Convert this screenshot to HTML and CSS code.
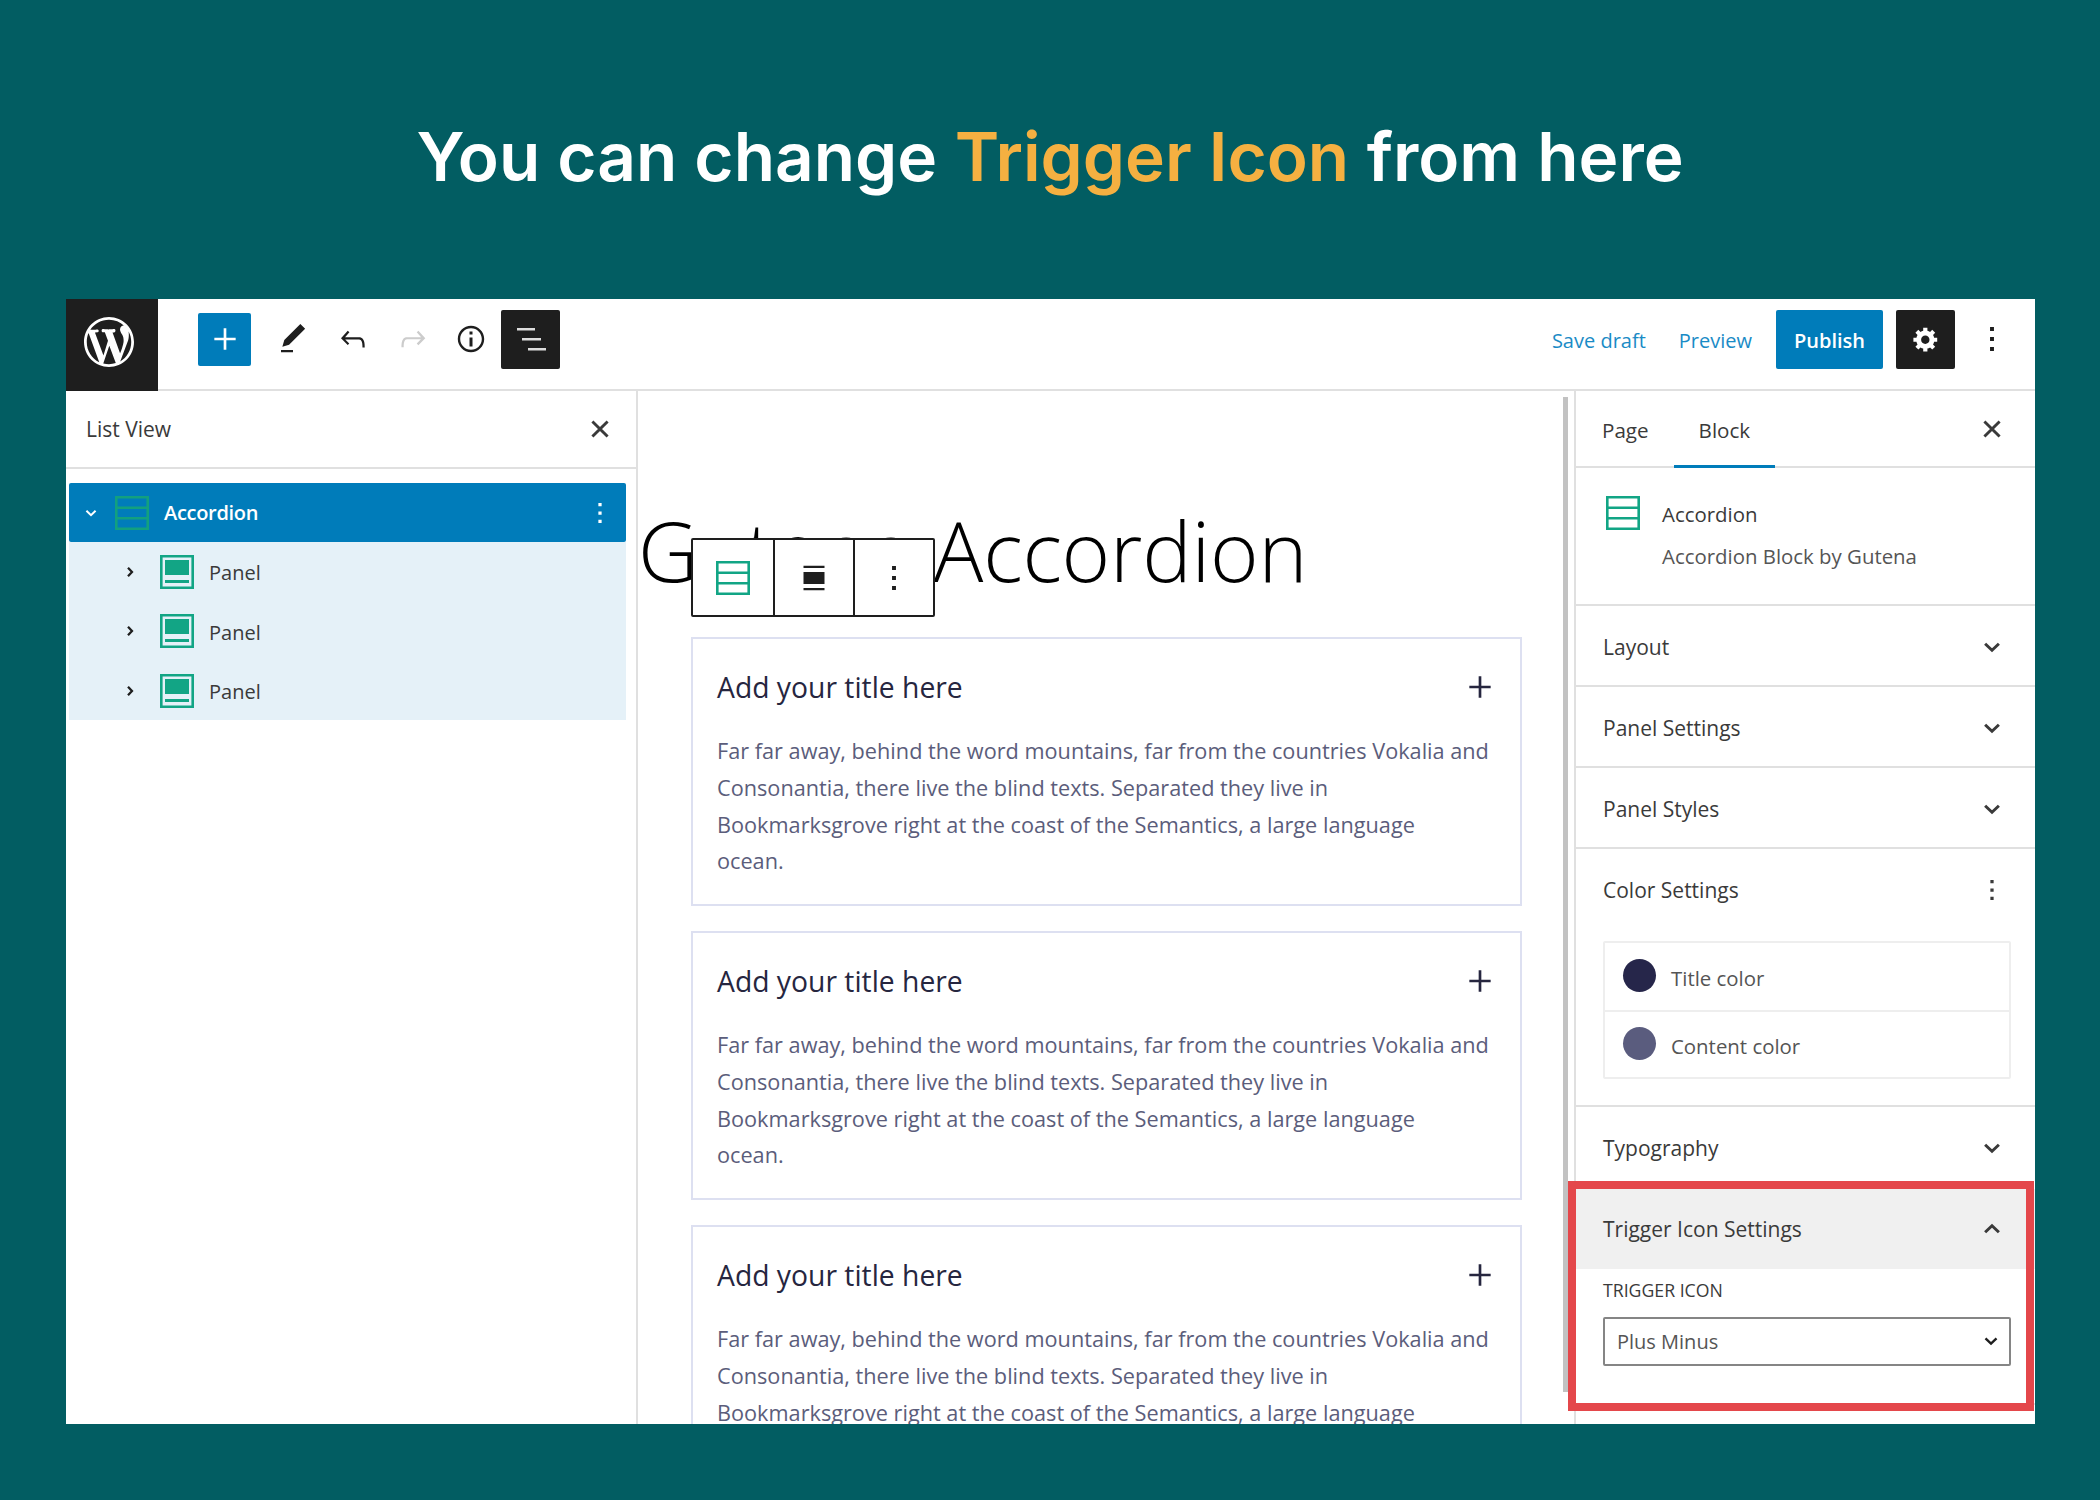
FILE: index.html
```html
<!DOCTYPE html>
<html lang="en">
<head>
  <meta charset="UTF-8">
  <title>Trigger Icon Settings</title>
  <link rel="stylesheet" href="styles.css">
</head>
<body>
  <svg class="defs" width="0" height="0">
    <symbol id="i-close" viewBox="0 0 24 24"><path d="M5.5 5.5l13 13M18.5 5.5l-13 13" fill="none" stroke="currentColor" stroke-width="2.5"/></symbol>
    <symbol id="i-down" viewBox="0 0 24 24"><path d="M17.5 9.4L12 14.6 6.5 9.4" fill="none" stroke="currentColor" stroke-width="2.4"/></symbol>
    <symbol id="i-up" viewBox="0 0 24 24"><path d="M6.5 14.6L12 9.4l5.5 5.2" fill="none" stroke="currentColor" stroke-width="2.4"/></symbol>
    <symbol id="i-right" viewBox="0 0 24 24"><path d="M9 5.5l6 6.5-6 6.5" fill="none" stroke="currentColor" stroke-width="3.4"/></symbol>
    <symbol id="i-dots" viewBox="0 0 24 24"><path d="M10.7 4h2.6v2.6h-2.6zM10.7 10.7h2.6v2.6h-2.6zM10.7 17.4h2.6V20h-2.6z"/></symbol>
    <symbol id="i-plus" viewBox="0 0 24 24"><path d="M11 4h2v7h7v2h-7v7h-2v-7H4v-2h7z"/></symbol>
    <symbol id="i-accordion" viewBox="0 0 34 34"><path d="M1.3 1.3h31.4v31.4H1.3zM1.3 11.7h31.4M1.3 22.3h31.4" fill="none" stroke="currentColor" stroke-width="2.6"/></symbol>
    <symbol id="i-panel" viewBox="0 0 34 34"><path d="M1.3 1.3h31.4v31.4H1.3z" fill="none" stroke="currentColor" stroke-width="2.6"/><path d="M5 5h24v15H5zM5 25h24v3H5z"/></symbol>
  </svg>

  <h1 class="headline">You can change <span class="accent">Trigger Icon</span> from here</h1>

  <div class="editor">
    <header class="topbar">
      <div class="wp-logo">
        <svg viewBox="0 0 20 20" width="50" height="50"><path d="M20 10c0-5.51-4.49-10-10-10C4.48 0 0 4.49 0 10c0 5.52 4.48 10 10 10 5.51 0 10-4.48 10-10zM7.78 15.37L4.37 6.22c.55-.02 1.17-.08 1.17-.08.5-.06.44-1.13-.06-1.11 0 0-1.45.11-2.37.11-.18 0-.37 0-.58-.01C4.12 2.69 6.87 1.11 10 1.11c2.33 0 4.45.87 6.05 2.34-.68-.11-1.65.39-1.65 1.58 0 .74.45 1.36.9 2.1.35.61.55 1.36.55 2.46 0 1.49-1.4 5-1.4 5l-3.03-8.37c.54-.02.82-.17.82-.17.5-.05.44-1.25-.06-1.22 0 0-1.44.12-2.38.12-.87 0-2.33-.12-2.33-.12-.5-.03-.56 1.2-.06 1.22l.92.08 1.26 3.41zM17.41 10c.24-.64.74-1.87.43-4.25.7 1.29 1.05 2.71 1.05 4.25 0 3.29-1.73 6.24-4.4 7.78.97-2.59 1.94-5.2 2.92-7.78zM6.1 18.09C3.12 16.65 1.11 13.53 1.11 10c0-1.3.23-2.48.72-3.59C3.25 10.3 4.67 14.2 6.1 18.09zm4.03-6.63l2.58 6.98c-.86.29-1.76.45-2.71.45-.79 0-1.57-.11-2.29-.33.81-2.38 1.62-4.74 2.42-7.1z"/></svg>
      </div>
      <div class="tools">
        <button class="add-btn"><svg width="32" height="32"><use href="#i-plus"/></svg></button>
        <svg class="tool" viewBox="0 0 24 24" width="36" height="36"><path d="M20.1 5.1L16.9 2 6.2 12.7l-1.3 4.4 4.5-1.3L20.1 5.1zM4 20.8h8v-1.5H4v1.5z"/></svg>
        <svg class="tool" viewBox="0 0 24 24" width="36" height="36"><path d="M18.3 11.7c-.6-.6-1.4-.9-2.3-.9H6.7l2.9-3.3-1.1-1-4.5 5L8.5 16l1-1-2.7-2.7H16c.5 0 .9.2 1.3.5 1 1 1 3.4 1 4.5v.3h1.5v-.2c0-1.5 0-4.3-1.5-5.7z"/></svg>
        <svg class="tool tool-off" viewBox="0 0 24 24" width="36" height="36"><path d="M15.6 6.5l-1.1 1 2.9 3.3H8c-.9 0-1.7.3-2.3.9-1.4 1.5-1.4 4.2-1.4 5.6v.2h1.5v-.3c0-1.1 0-3.5 1-4.5.3-.3.7-.5 1.3-.5h9.2L14.5 15l1.1 1.1 4.6-4.6-4.6-5z"/></svg>
        <svg class="tool" viewBox="0 0 24 24" width="36" height="36"><path d="M12 3.2c-4.8 0-8.8 3.9-8.8 8.8 0 4.8 3.9 8.8 8.8 8.8 4.8 0 8.8-3.9 8.8-8.8 0-4.8-4-8.8-8.8-8.8zm0 16c-4 0-7.2-3.3-7.2-7.2C4.8 8 8 4.8 12 4.8s7.2 3.3 7.2 7.2c0 4-3.2 7.2-7.2 7.2zM11 17h2v-6h-2v6zm0-8h2V7h-2v2z"/></svg>
        <button class="dark-btn list-btn">
          <svg viewBox="0 0 32 32" width="32" height="32"><path d="M2 5h18v2.6H2zM7 15h19v2.6H7zM13 25h18v2.6H13z"/></svg>
        </button>
      </div>
      <div class="actions">
        <a class="link save-link">Save draft</a>
        <a class="link preview-link">Preview</a>
        <button class="publish-btn">Publish</button>
        <button class="dark-btn gear-btn">
          <svg viewBox="0 0 20 20" width="28" height="28"><path d="M18 12h-2.18c-.17.7-.44 1.35-.81 1.93l1.54 1.54-2.1 2.1-1.54-1.54c-.58.36-1.23.63-1.91.79V19H8v-2.18c-.68-.16-1.33-.43-1.91-.79l-1.54 1.54-2.12-2.12 1.54-1.54c-.36-.58-.63-1.23-.79-1.91H1V9.03h2.17c.16-.7.44-1.35.8-1.94L2.43 5.55l2.1-2.1 1.54 1.54c.58-.37 1.24-.64 1.93-.81V2h3v2.18c.68.16 1.33.43 1.91.79l1.54-1.54 2.12 2.12-1.54 1.54c.36.59.64 1.24.8 1.94H18V12zm-8.5 1.5c1.66 0 3-1.34 3-3s-1.34-3-3-3-3 1.34-3 3 1.34 3 3 3z"/></svg>
        </button>
        <svg class="tool more" width="36" height="36"><use href="#i-dots"/></svg>
      </div>
    </header>

    <div class="workspace">
      <aside class="list-view">
        <div class="list-head">
          <span>List View</span>
          <svg width="28" height="28"><use href="#i-close"/></svg>
        </div>
        <ul class="tree">
          <li class="tree-row tree-root">
            <svg class="tree-arrow" width="20" height="20"><use href="#i-down"/></svg>
            <svg class="tree-icon" width="34" height="34"><use href="#i-accordion"/></svg>
            <span class="tree-label">Accordion</span>
            <svg class="tree-more" width="30" height="30"><use href="#i-dots"/></svg>
          </li>
          <li class="tree-row tree-child">
            <svg class="tree-arrow" width="16" height="16"><use href="#i-right"/></svg>
            <svg class="tree-icon" width="34" height="34"><use href="#i-panel"/></svg>
            <span>Panel</span>
          </li>
          <li class="tree-row tree-child">
            <svg class="tree-arrow" width="16" height="16"><use href="#i-right"/></svg>
            <svg class="tree-icon" width="34" height="34"><use href="#i-panel"/></svg>
            <span>Panel</span>
          </li>
          <li class="tree-row tree-child">
            <svg class="tree-arrow" width="16" height="16"><use href="#i-right"/></svg>
            <svg class="tree-icon" width="34" height="34"><use href="#i-panel"/></svg>
            <span>Panel</span>
          </li>
        </ul>
      </aside>

      <main class="canvas">
        <h2 class="post-title">Gutena Accordion</h2>
        <div class="block-toolbar">
          <div class="block-tool">
            <svg class="teal" width="34" height="34"><use href="#i-accordion"/></svg>
          </div>
          <div class="block-tool">
            <svg viewBox="0 0 24 24" width="36" height="36"><path d="M5 3.8h14v1.6H5zM5 8h14v8H5zM5 18.6h14v1.6H5z"/></svg>
          </div>
          <div class="block-tool">
            <svg width="36" height="36"><use href="#i-dots"/></svg>
          </div>
        </div>

        <article class="panel">
          <div class="panel-title">
            <span>Add your title here</span>
            <svg width="32" height="32"><use href="#i-plus"/></svg>
          </div>
          <p class="panel-text">Far far away, behind the word mountains, far from the countries Vokalia and Consonantia, there live the blind texts. Separated they live in Bookmarksgrove right at the coast of the Semantics, a large language<br>ocean.</p>
        </article>
        <article class="panel">
          <div class="panel-title">
            <span>Add your title here</span>
            <svg width="32" height="32"><use href="#i-plus"/></svg>
          </div>
          <p class="panel-text">Far far away, behind the word mountains, far from the countries Vokalia and Consonantia, there live the blind texts. Separated they live in Bookmarksgrove right at the coast of the Semantics, a large language<br>ocean.</p>
        </article>
        <article class="panel">
          <div class="panel-title">
            <span>Add your title here</span>
            <svg width="32" height="32"><use href="#i-plus"/></svg>
          </div>
          <p class="panel-text">Far far away, behind the word mountains, far from the countries Vokalia and Consonantia, there live the blind texts. Separated they live in Bookmarksgrove right at the coast of the Semantics, a large language<br>ocean.</p>
        </article>
        <div class="scrollbar"></div>
      </main>

      <aside class="sidebar">
        <div class="side-tabs">
          <span class="side-tab">Page</span>
          <span class="side-tab side-tab-on">Block</span>
          <svg class="side-close" width="28" height="28"><use href="#i-close"/></svg>
        </div>
        <div class="block-card">
          <svg class="teal" width="34" height="34"><use href="#i-accordion"/></svg>
          <div>
            <div class="block-name">Accordion</div>
            <div class="block-desc">Accordion Block by Gutena</div>
          </div>
        </div>
        <section class="side-section">
          <div class="side-head"><span>Layout</span><svg width="30" height="30"><use href="#i-down"/></svg></div>
        </section>
        <section class="side-section">
          <div class="side-head"><span>Panel Settings</span><svg width="30" height="30"><use href="#i-down"/></svg></div>
        </section>
        <section class="side-section">
          <div class="side-head"><span>Panel Styles</span><svg width="30" height="30"><use href="#i-down"/></svg></div>
        </section>
        <section class="side-section color-section">
          <div class="side-head"><span>Color Settings</span><svg width="30" height="30"><use href="#i-dots"/></svg></div>
          <div class="color-box">
            <div class="color-row"><i class="swatch swatch-title"></i>Title color</div>
            <div class="color-row"><i class="swatch swatch-content"></i>Content color</div>
          </div>
        </section>
        <section class="side-section typography-section">
          <div class="side-head"><span>Typography</span><svg width="30" height="30"><use href="#i-down"/></svg></div>
        </section>
        <section class="side-section trigger-section">
          <div class="side-head trigger-head"><span>Trigger Icon Settings</span><svg width="30" height="30"><use href="#i-up"/></svg></div>
          <div class="trigger-body">
            <label class="field-label" for="triggerIcon">Trigger Icon</label>
            <div class="select-wrap">
              <select id="triggerIcon" class="select">
                <option>Plus Minus</option>
              </select>
              <svg width="24" height="24"><use href="#i-down"/></svg>
            </div>
          </div>
          <div class="highlight"></div>
        </section>
      </aside>
    </div>
  </div>
</body>
</html>
```

FILE: styles.css
```css
* { box-sizing: border-box; }
html, body { margin: 0; height: 100%; }
body {
  background: #025d62;
  font-family: "Open Sans", "Noto Sans", sans-serif;
  color: #1e1e1e;
  overflow: hidden;
}
.defs { position: absolute; }
svg { display: block; flex: none; fill: currentColor; }
button { border: none; padding: 0; font: inherit; }

.headline {
  height: 299px;
  margin: 0;
  padding-top: 14px;
  display: flex;
  align-items: center;
  justify-content: center;
  gap: 0.26em;
  font-family: Inter, sans-serif;
  font-size: 67.5px;
  font-weight: 600;
  color: #fff;
}
.accent { color: #f5b041; }

.editor {
  width: 1969px;
  height: 1125px;
  margin-left: 66px;
  background: #fff;
  display: flex;
  flex-direction: column;
  overflow: hidden;
}

/* top bar */
.topbar {
  height: 92px;
  flex: none;
  display: flex;
  align-items: center;
  border-bottom: 2px solid #e0e0e0;
}
.wp-logo {
  width: 92px;
  height: 92px;
  margin-bottom: -2px;
  padding: 0 6px 7px 0;
  background: #1e1e1e;
  color: #fff;
  display: flex;
  align-items: center;
  justify-content: center;
}
.tools {
  display: flex;
  align-items: center;
  margin: 0 0 10px 40px;
}
.add-btn {
  width: 53px;
  height: 53px;
  margin-right: 24px;
  border-radius: 2px;
  background: #007cba;
  color: #fff;
  display: flex;
  align-items: center;
  justify-content: center;
}
.add-btn svg { width: 32px; height: 32px; }
.tool { margin-right: 24px; }
.tools .tool:nth-child(4) { margin-right: 22px; }
.tools .tool:nth-child(5) { margin-right: 12px; }
.tool-off { fill: #ccc; }
.dark-btn {
  height: 59px;
  border-radius: 2px;
  background: #1e1e1e;
  color: #fff;
  display: flex;
  align-items: center;
  justify-content: center;
}
.list-btn { width: 59px; }
.list-btn svg { fill: #ddd; }
.actions {
  margin: 0 0 10px auto;
  display: flex;
  align-items: center;
  padding-right: 25px;
}
.link { padding-top: 3px; color: #1a8bc6; font-size: 20px; }
.save-link { margin-right: 33px; }
.preview-link { margin-right: 24px; }
.publish-btn {
  width: 107px;
  height: 59px;
  margin-right: 13px;
  padding-top: 3px;
  border-radius: 2px;
  background: #007cba;
  color: #fff;
  font-size: 20px;
  font-weight: 600;
}
.gear-btn { width: 59px; margin-right: 19px; }
.more { margin-right: 0; }

/* three columns */
.workspace {
  flex: 1;
  min-height: 0;
  display: flex;
}

.list-view {
  width: 572px;
  flex: none;
  border-right: 2px solid #e0e0e0;
}
.list-head {
  height: 78px;
  padding: 0 22px 0 20px;
  display: flex;
  align-items: center;
  justify-content: space-between;
  border-bottom: 2px solid #e0e0e0;
  font-size: 21px;
  color: #3a3a3a;
}
.tree {
  list-style: none;
  margin: 14px 0 0 3px;
  padding: 0;
  width: 557px;
}
.tree-row {
  height: 59.3px;
  display: flex;
  align-items: center;
  font-size: 20px;
}
.tree-root {
  padding-left: 12px;
  border-radius: 2px;
  background: #007cba;
  color: #fff;
}
.tree-root .tree-arrow { margin-right: 14px; }
.tree-root .tree-icon { color: #12a07f; margin-right: 15px; }
.tree-label { font-weight: 600; letter-spacing: -0.3px; }
.tree-more { margin-left: auto; margin-right: 11px; }
.tree-child {
  padding-left: 53px;
  background: #e5f1f8;
  color: #3a3a3a;
}
.tree-child span { padding-top: 2px; }
.tree-child .tree-arrow { margin-right: 22px; color: #1e1e1e; }
.tree-child .tree-icon { color: #12a585; margin-right: 15px; }

/* canvas */
.canvas {
  flex: 1;
  min-width: 0;
  position: relative;
  padding: 0 0 0 53px;
  border-right: 2px solid #e0e0e0;
}
.post-title {
  margin: 0 0 0 -53px;
  height: 246px;
  padding-top: 102px;
  font-size: 83px;
  line-height: 114px;
  font-weight: 350;
  letter-spacing: -0.2px;
  color: #000;
  white-space: nowrap;
}
.block-toolbar {
  position: absolute;
  left: 53px;
  top: 147px;
  height: 79px;
  display: flex;
  background: #fff;
  border: 2px solid #1e1e1e;
  border-radius: 2px;
}
.block-tool {
  width: 80px;
  display: flex;
  align-items: center;
  justify-content: center;
  border-left: 2px solid #1e1e1e;
}
.block-tool:first-child { border-left: none; }
.teal { color: #12a585; }

.panel {
  width: 831px;
  height: 269px;
  margin-bottom: 25px;
  padding: 25px 24px 0 24px;
  border: 2px solid #dde0f1;
}
.panel-title {
  display: flex;
  align-items: center;
  justify-content: space-between;
  height: 46px;
  font-size: 28.3px;
  color: #26263f;
}
.panel-text {
  margin: 23px 2px 0 0;
  font-size: 21.7px;
  line-height: 36.8px;
  color: #5b5d7b;
}
.scrollbar {
  position: absolute;
  right: 6px;
  top: 6px;
  bottom: 32px;
  width: 5px;
  background: #c2c2c2;
}

/* right sidebar */
.sidebar {
  width: 459px;
  flex: none;
}
.side-tabs {
  height: 77px;
  padding-left: 26px;
  display: flex;
  align-items: stretch;
  border-bottom: 2px solid #e0e0e0;
  font-size: 20.6px;
  color: #3a3a3a;
}
.side-tab {
  display: flex;
  align-items: center;
  padding-top: 3px;
}
.side-tab-on {
  margin-left: 25px;
  padding: 3px 25px 0;
  margin-bottom: -2px;
  border-bottom: 3px solid #007cba;
}
.side-close { margin-left: auto; margin-right: 29px; margin-top: 24px; }
.block-card {
  height: 138px;
  padding: 28px 0 0 30px;
  display: flex;
  gap: 22px;
  border-bottom: 2px solid #e0e0e0;
  font-size: 20.4px;
  color: #3a3a3a;
}
.block-card > div { padding-top: 4px; }
.block-desc { margin-top: 14px; color: #555; }
.side-section {
  border-bottom: 2px solid #e0e0e0;
  position: relative;
}
.side-head {
  height: 78.9px;
  padding: 3px 28px 0 27px;
  display: flex;
  align-items: center;
  justify-content: space-between;
  font-size: 21px;
  font-weight: 500;
  color: #3a3a3a;
}
.color-section { height: 258px; }
.color-box {
  margin: 13px 24px 0 27px;
  border: 2px solid #eee;
  border-radius: 2px;
}
.color-row {
  height: 67px;
  padding: 3px 0 0 18px;
  display: flex;
  align-items: center;
  gap: 15px;
  font-size: 20.4px;
  color: #555;
}
.color-row + .color-row { border-top: 2px solid #eee; }
.swatch {
  width: 33px;
  height: 33px;
  margin-top: -4px;
  border-radius: 50%;
}
.swatch-title { background: #26264a; }
.swatch-content { background: #5a5c7e; }

.typography-section { height: 82px; border-bottom: none; }
.trigger-section { height: 216px; }
.trigger-head { height: 80px; padding-top: 0; background: #f0f0f0; }
.trigger-body { padding: 9px 24px 0 27px; }
.field-label {
  display: block;
  font-size: 17.7px;
  font-weight: 500;
  text-transform: uppercase;
  color: #3a3a3a;
}
.select-wrap {
  position: relative;
  margin-top: 15px;
}
.select-wrap svg {
  position: absolute;
  right: 8px;
  top: 12px;
  pointer-events: none;
}
.select {
  width: 100%;
  height: 49px;
  padding: 0 12px;
  appearance: none;
  background: #fff;
  border: 2px solid #858585;
  border-radius: 2px;
  font: inherit;
  font-size: 20px;
  color: #555;
}
.highlight {
  position: absolute;
  left: -8px;
  right: 1px;
  top: -8px;
  bottom: -8px;
  border: 8px solid #e4474b;
  pointer-events: none;
}
```
